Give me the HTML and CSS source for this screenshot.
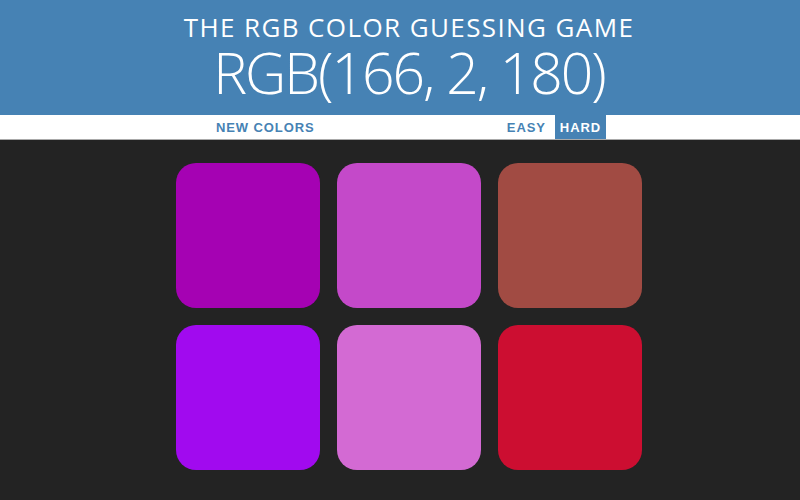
FILE: index.html
```
<!DOCTYPE html>
<html>
<head>
<meta charset="utf-8">
<link rel="stylesheet" href="styles.css">
</head>
<body>
<header class="header">
  <h1 class="title">
    <span class="title-small">THE RGB COLOR GUESSING GAME</span>
    <span class="title-big">RGB(166, 2, 180)</span>
  </h1>
</header>
<nav class="stripe">
  <div class="stripe-inner">
    <button class="btn">NEW COLORS</button>
    <div class="modes">
      <button class="btn">EASY</button>
      <button class="btn selected">HARD</button>
    </div>
  </div>
</nav>
<main class="grid">
  <div class="square sq1"></div>
  <div class="square sq2"></div>
  <div class="square sq3"></div>
  <div class="square sq4"></div>
  <div class="square sq5"></div>
  <div class="square sq6"></div>
</main>
</body>
</html>
```
FILE: styles.css
```
html, body {
  margin: 0;
  padding: 0;
}
body {
  background: #232323;
  width: 800px;
  height: 500px;
  overflow: hidden;
  font-family: "Open Sans", sans-serif;
}
.header {
  background: #4682b4;
  height: 115px;
  padding-left: 18px;
  box-sizing: border-box;
  overflow: hidden;
}
.title {
  margin: 0;
  font-weight: 400;
  color: #fff;
  text-align: center;
  padding-top: 10px;
}
.title-small {
  display: block;
  font-size: 26px;
  line-height: 34px;
  letter-spacing: 1.4px;
}
.title-big {
  display: block;
  font-size: 57px;
  font-weight: 300;
  line-height: 56px;
  letter-spacing: -2px;
}
.stripe {
  background: #fff;
  height: 24px;
  border-bottom: 1px solid #aaa;
}
.stripe-inner {
  margin-left: 211px;
  width: 395px;
  height: 24px;
  display: flex;
  justify-content: space-between;
}
.modes {
  display: flex;
  gap: 4px;
}
.btn {
  border: none;
  background: #fff;
  color: #4682b4;
  font-family: "Liberation Sans", Arial, sans-serif;
  font-weight: 700;
  font-size: 13px;
  letter-spacing: 0.9px;
  padding: 0 5px;
  height: 24px;
  margin: 0;
}
.selected {
  background: #4682b4;
  color: #fff;
}
.grid {
  margin: 23px 0 0 176px;
  width: 466px;
  display: grid;
  grid-template-columns: repeat(3, 144px);
  grid-auto-rows: 145px;
  column-gap: 17px;
  row-gap: 17px;
}
.square {
  border-radius: 20px;
}
.sq1 { background: #a502b3; }
.sq2 { background: #c449c9; }
.sq3 { background: #a14b43; }
.sq4 { background: #a10aef; }
.sq5 { background: #d36ad3; }
.sq6 { background: #cc0e31; }
```
